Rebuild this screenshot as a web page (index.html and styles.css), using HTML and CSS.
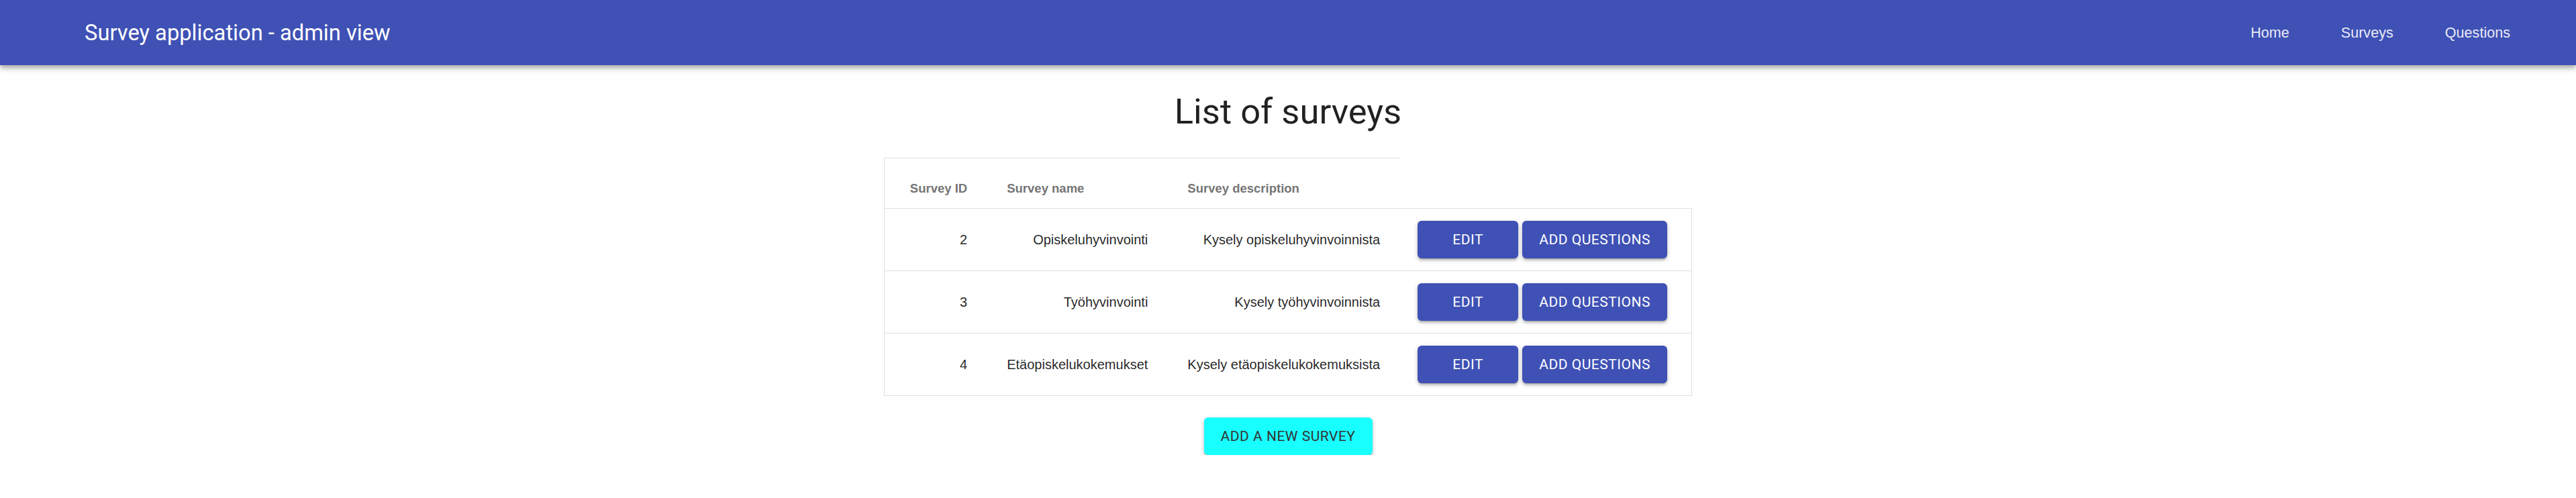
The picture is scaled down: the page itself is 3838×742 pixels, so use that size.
FILE: index.html
```html
<!DOCTYPE html>
<html lang="fi">
<head>
<meta charset="utf-8">
<title>Survey application - admin view</title>
<link rel="stylesheet" href="styles.css">
</head>
<body>
<header class="appbar">
  <div class="brand">Survey application - admin view</div>
  <nav class="nav">
    <a class="nav-link" href="#">Home</a>
    <a class="nav-link" href="#">Surveys</a>
    <a class="nav-link" href="#">Questions</a>
  </nav>
</header>
<main class="main">
  <h1 class="page-title">List of surveys</h1>
  <table class="survey-table">
    <thead>
      <tr>
        <th>Survey ID</th>
        <th>Survey name</th>
        <th>Survey description</th>
      </tr>
    </thead>
    <tbody>
      <tr>
        <td class="num">2</td>
        <td class="num">Opiskeluhyvinvointi</td>
        <td class="num">Kysely opiskeluhyvinvoinnista</td>
        <td class="actions"><button class="btn btn-edit">EDIT</button><button class="btn btn-add">ADD QUESTIONS</button></td>
      </tr>
      <tr>
        <td class="num">3</td>
        <td class="num">Työhyvinvointi</td>
        <td class="num">Kysely työhyvinvoinnista</td>
        <td class="actions"><button class="btn btn-edit">EDIT</button><button class="btn btn-add">ADD QUESTIONS</button></td>
      </tr>
      <tr>
        <td class="num">4</td>
        <td class="num">Etäopiskelukokemukset</td>
        <td class="num">Kysely etäopiskelukokemuksista</td>
        <td class="actions"><button class="btn btn-edit">EDIT</button><button class="btn btn-add">ADD QUESTIONS</button></td>
      </tr>
    </tbody>
  </table>
  <button class="btn-new">ADD A NEW SURVEY</button>
</main>
</body>
</html>
```
FILE: styles.css
```css
html, body {
  margin: 0;
  padding: 0;
  background: #ffffff;
}

body {
  font-family: "Liberation Sans", Arial, sans-serif;
}

.appbar {
  height: 97px;
  box-sizing: border-box;
  background: #3f51b5;
  display: flex;
  align-items: center;
  justify-content: space-between;
  padding: 0 98px 0 126px;
  box-shadow: 0 3px 6px -1px rgba(0,0,0,0.2), 0 6px 7px 0 rgba(0,0,0,0.14), 0 1px 15px 0 rgba(0,0,0,0.12);
  position: relative;
  z-index: 1;
}

.brand {
  font-family: Roboto, sans-serif;
  font-size: 32.7px;
  font-weight: 400;
  color: #ffffff;
  line-height: 40px;
}

.nav {
  display: flex;
  gap: 77px;
  padding-top: 1px;
}

.nav-link {
  font-family: "Liberation Sans", Arial, sans-serif;
  font-size: 21.6px;
  color: #e8eaf6;
  text-decoration: none;
  line-height: 26px;
}

.main {
  display: flex;
  flex-direction: column;
  align-items: center;
}

.page-title {
  font-family: Roboto, sans-serif;
  font-size: 52.5px;
  font-weight: 400;
  line-height: 60px;
  color: rgba(0,0,0,0.87);
  margin: 39px 0 39px;
}

.survey-table {
  border-collapse: collapse;
  font-family: "Liberation Sans", Arial, sans-serif;
}

.survey-table th {
  font-size: 18.5px;
  font-weight: 700;
  color: #757575;
  text-align: left;
  line-height: 21px;
  padding: 34px 30px 19px 29px;
  border-top: 1px solid #e0e0e0;
  white-space: nowrap;
}

.survey-table td {
  font-size: 20px;
  color: rgba(0,0,0,0.87);
  line-height: 23px;
  padding: 18px 30px 18px 29px;
  border-top: 1px solid #e0e0e0;
  border-bottom: 1px solid #e0e0e0;
  height: 56px;
  white-space: nowrap;
  vertical-align: middle;
}

.survey-table th:first-child,
.survey-table td:first-child {
  border-left: 1px solid #e0e0e0;
  padding-left: 38px;
}

.survey-table td.num {
  text-align: right;
}

.survey-table td.actions {
  border-right: 1px solid #e0e0e0;
  padding-left: 26px;
  padding-right: 36px;
}

.btn {
  font-family: Roboto, sans-serif;
  font-size: 21px;
  font-weight: 400;
  letter-spacing: 0.5px;
  color: #ffffff;
  background: #3f51b5;
  border: none;
  border-radius: 6px;
  height: 56px;
  vertical-align: middle;
  box-shadow: 0 2px 7px 0 rgba(0,0,0,0.2), 0 3px 3px 0 rgba(0,0,0,0.14), 0 4px 1px -3px rgba(0,0,0,0.12);
  cursor: pointer;
}

.btn-edit {
  width: 150px;
  padding: 0;
}

.btn-add {
  width: 216px;
  padding: 0;
  margin-left: 6px;
}

.btn-new {
  margin-top: 32px;
  width: 251px;
  height: 56px;
  font-family: Roboto, sans-serif;
  font-size: 21px;
  font-weight: 400;
  letter-spacing: 0.5px;
  color: #333333;
  background: #18ffff;
  border: none;
  border-radius: 6px;
  box-shadow: 0 2px 7px 0 rgba(0,0,0,0.2), 0 3px 3px 0 rgba(0,0,0,0.14), 0 4px 1px -3px rgba(0,0,0,0.12);
  cursor: pointer;
}
```
